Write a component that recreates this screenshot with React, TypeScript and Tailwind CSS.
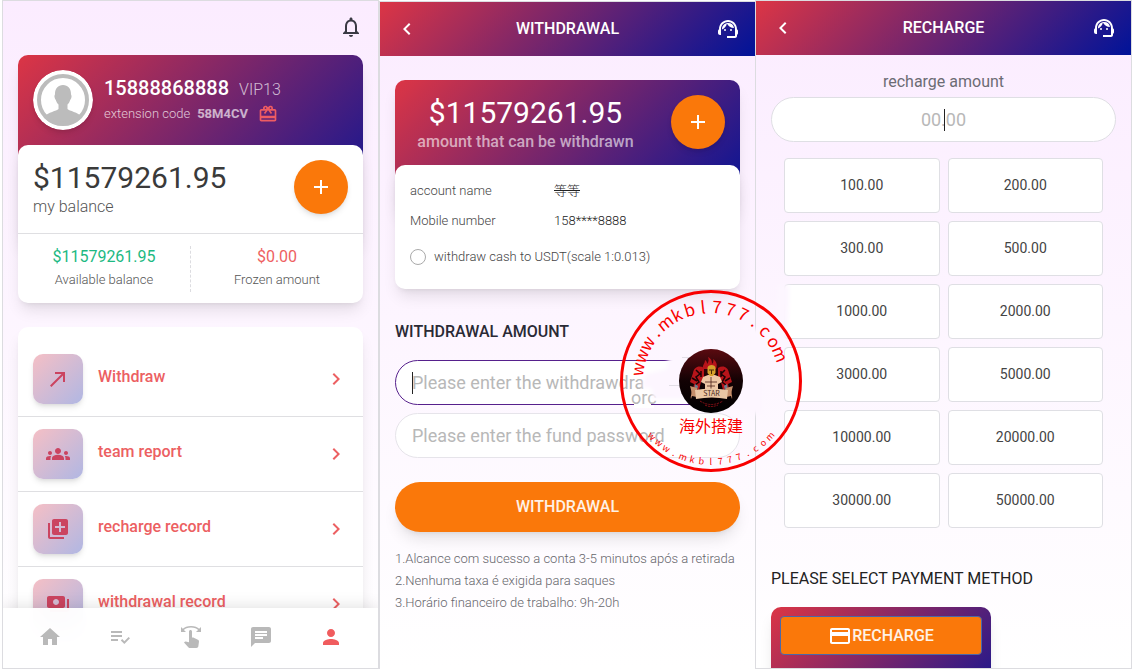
import {
  MdAdd,
  MdCallMade,
  MdChat,
  MdChevronLeft,
  MdChevronRight,
  MdCreditCard,
  MdGroups,
  MdHome,
  MdLibraryAdd,
  MdNotificationsNone,
  MdPayments,
  MdPerson,
  MdPlaylistAddCheck,
  MdRedeem,
  MdSupportAgent,
  MdSwipe,
} from "react-icons/md";

const menu = [
  { label: "Withdraw", icon: MdCallMade },
  { label: "team report", icon: MdGroups },
  { label: "recharge record", icon: MdLibraryAdd },
  { label: "withdrawal record", icon: MdPayments },
];

const tabs = [
  { label: "Home", icon: MdHome },
  { label: "Tasks", icon: MdPlaylistAddCheck },
  { label: "Grab", icon: MdSwipe },
  { label: "Messages", icon: MdChat },
  { label: "Mine", icon: MdPerson, active: true },
];

const amounts = [
  "100.00", "200.00",
  "300.00", "500.00",
  "1000.00", "2000.00",
  "3000.00", "5000.00",
  "10000.00", "20000.00",
  "30000.00", "50000.00",
];

const notes = [
  "1.Alcance com sucesso a conta 3-5 minutos após a retirada",
  "2.Nenhuma taxa é exigida para saques",
  "3.Horário financeiro de trabalho: 9h-20h",
];

const site = "www.mkbl777.com".split("");

function TopBar({ title }: { title: string }) {
  return (
    <header className="flex h-[54px] items-center justify-between bg-[linear-gradient(135deg,#dc3545,#001399)] px-[15px] pb-px text-white">
      <button type="button" aria-label="Back">
        <MdChevronLeft className="size-6 [&>path:last-child]:stroke-current" />
      </button>
      <h1 className="text-base font-medium">{title}</h1>
      <button type="button" aria-label="Support">
        <MdSupportAgent className="size-6" />
      </button>
    </header>
  );
}

function PlusButton() {
  return (
    <button
      type="button"
      aria-label="Add"
      className="grid size-[54px] shrink-0 place-items-center rounded-full bg-[#fa780a] text-white shadow-md"
    >
      <MdAdd className="size-6" />
    </button>
  );
}

function Account() {
  return (
    <section className="relative flex-1 overflow-hidden border border-[#dcdce0] bg-linear-to-b from-[#fbecff] to-white">
      <div className="flex h-[54px] items-center justify-end px-[15px] pb-[2px]">
        <button type="button" aria-label="Notifications" className="text-[#3a3a44]">
          <MdNotificationsNone className="size-6" />
        </button>
      </div>

      <div className="px-[15px]">
        <div className="h-[190px] rounded-[10px] bg-[linear-gradient(135deg,#dc3545,#001399)] p-[15px] shadow-lg">
          <div className="flex items-center gap-[11px]">
            <Avatar />
            <div>
              <div className="flex items-baseline gap-[10px] text-white">
                <span className="text-xl leading-7 font-medium">15888868888</span>
                <span className="text-base font-light text-white/70">VIP13</span>
              </div>
              <div className="flex items-center text-[13px] leading-6 font-light text-white/75">
                extension code
                <b className="ml-[7px] font-bold text-white/65">58M4CV</b>
                <MdRedeem className="ml-[10px] size-5 text-[#ee5c62]" />
              </div>
            </div>
          </div>
        </div>

        <div className="-mt-[100px] rounded-[10px] bg-white shadow-lg">
          <div className="flex h-[89px] items-start justify-between border-b border-[#dfdfe2] px-[15px] pt-[15px]">
            <div>
              <p className="text-[30px] leading-[36px] text-[#3a3a3a]">$11579261.95</p>
              <p className="text-base leading-[22px] font-light text-[#555]">my balance</p>
            </div>
            <PlusButton />
          </div>
          <div className="flex pt-3 pb-[11px] text-center">
            <div className="flex-1 border-r border-dashed border-[#dcdce0]">
              <p className="text-base leading-[22px] text-[#1cb982]">$11579261.95</p>
              <p className="text-[13px] leading-6 font-light text-[#555]">Available balance</p>
            </div>
            <div className="flex-1">
              <p className="text-base leading-[22px] text-[#ee5f62]">$0.00</p>
              <p className="text-[13px] leading-6 font-light text-[#555]">Frozen amount</p>
            </div>
          </div>
        </div>

        <ul className="mt-6 rounded-[10px] bg-white pt-[15px] shadow-lg">
          {menu.map(({ label, icon: Icon }) => (
            <li key={label} className="border-b border-[#dfdfe2]">
              <a href="#" className="flex items-center px-[15px] py-3 text-[#ec6062]">
                <span className="grid size-[50px] place-items-center rounded-[10px] bg-[linear-gradient(135deg,#f5bfc5,#b0b7e3)] text-[#cb4460] shadow-md">
                  <Icon className="size-6" />
                </span>
                <span className="ml-[15px] flex-1 pb-1 text-base font-medium">{label}</span>
                <MdChevronRight className="size-6 [&>path:last-child]:stroke-current" />
              </a>
            </li>
          ))}
        </ul>
      </div>

      <nav className="absolute inset-x-0 bottom-0 flex h-[60px] items-center bg-white/95 px-[12px] pb-[2px] shadow-[0_0_16px_rgba(0,0,0,0.14)] backdrop-blur-md">
        {tabs.map(({ label, icon: Icon, active }) => (
          <button
            key={label}
            type="button"
            aria-label={label}
            className={`grid flex-1 place-items-center ${active ? "text-[#f05c5e]" : "text-[#b9b9b9]"}`}
          >
            <Icon className="size-6" />
          </button>
        ))}
      </nav>
    </section>
  );
}

function Avatar() {
  return (
    <svg viewBox="0 0 60 60" className="size-[60px] rounded-full shadow-md" aria-hidden="true">
      <circle cx="30" cy="30" r="30" fill="#fff" />
      <path
        d="M30 15c-5 0-8 3.500-8 9 0 1-.8 1.500-.5 3 .3 2 1.300 2.500 1.700 4 .4 1.500 1.300 2.500 2.300 3.500V39c-2 2-10 3-15 8 5 5 12 8.500 19.500 8.500S44 52 49.500 47c-5-5-13-6-15-8v-4.500c1-1 1.900-2 2.300-3.500.4-1.500 1.400-2 1.700-4 .3-1.500-.5-2-.5-3 0-5.500-3-9-8-9z"
        fill="#bcbcbc"
      />
      <circle cx="30" cy="30" r="24" fill="none" stroke="#bcbcbc" strokeWidth="4" />
    </svg>
  );
}

function Withdrawal() {
  return (
    <section className="mt-px flex-1 overflow-hidden border-t border-l border-[#dcdce0] bg-linear-to-b from-[#fbecff] to-white">
      <TopBar title="WITHDRAWAL" />
      <div className="px-[15px] pt-6">
        <div className="h-[133px] rounded-[10px] bg-[linear-gradient(135deg,#dc3545,#001399)] p-[15px] shadow-lg">
          <div className="flex">
            <div className="flex-1 pr-[30px] text-center">
              <p className="text-[30px] leading-9 text-white">$11579261.95</p>
              <p className="text-base leading-[22px] font-medium text-white/60">amount that can be withdrawn</p>
            </div>
            <PlusButton />
          </div>
        </div>

        <div className="-mt-12 rounded-[10px] bg-white px-[15px] pt-[11px] pb-[16px] text-[13px] font-light text-[#444] shadow-lg">
          <dl className="grid grid-cols-[144px_1fr] leading-[30px]">
            <dt>account name</dt>
            <dd className="text-[#222] line-through">等等</dd>
            <dt>Mobile number</dt>
            <dd className="text-[#222]">158****8888</dd>
          </dl>
          <label className="flex h-[37px] items-center gap-2 pt-1">
            <input
              type="radio"
              name="usdt"
              className="size-4 appearance-none rounded-full border border-[#aaa] bg-white"
            />
            withdraw cash to USDT(scale 1:0.013)
          </label>
        </div>

        <form className="mt-[31px]">
          <h2 className="text-base font-medium text-[#2a2a35]">WITHDRAWAL AMOUNT</h2>
          <div className="relative mt-4">
            <input
              type="text"
              aria-label="Withdrawal amount"
              placeholder="Please enter the withdrawdra"
              className="h-[45px] w-full rounded-full border border-[#56208c] bg-white px-4 text-lg outline-none placeholder:text-[#b8b8b8]"
            />
            <span className="absolute top-3 left-[17px] h-[22px] w-px bg-[#222]" />
          </div>
          <input
            type="password"
            aria-label="Fund password"
            placeholder="Please enter the fund password"
            className="mt-2 h-[45px] w-full rounded-full border border-[#e6e4ea] bg-white px-4 text-lg outline-none placeholder:text-[#b8b8b8]"
          />
          <button
            type="button"
            className="mt-6 h-[50px] w-full rounded-full bg-[#fa780a] text-base font-medium text-white/90 shadow-lg"
          >
            WITHDRAWAL
          </button>
        </form>

        <div className="mt-4 text-[13px] leading-[22px] font-light text-[#66666c]">
          {notes.map((note) => (
            <p key={note} className="whitespace-nowrap">{note}</p>
          ))}
        </div>
      </div>
    </section>
  );
}

function Recharge() {
  return (
    <section className="flex-1 overflow-hidden border border-[#dcdce0] bg-linear-to-b from-[#fbecff] to-white">
      <TopBar title="RECHARGE" />
      <div className="px-[15px] pt-[15px]">
        <label htmlFor="amount" className="block text-center text-base text-[#6c6c74]">
          recharge amount
        </label>
        <div className="relative mt-[3px]">
          <input
            id="amount"
            type="text"
            placeholder="00.00"
            className="h-[45px] w-full rounded-full border border-[#dfdfe4] bg-white px-4 text-center text-lg outline-none placeholder:text-[#b8b8b8]"
          />
          <span className="absolute top-3 left-1/2 h-[22px] w-px bg-[#222]" />
        </div>

        <div className="mt-4 grid grid-cols-2 gap-2 px-[13px]">
          {amounts.map((amount) => (
            <button
              key={amount}
              type="button"
              className="h-[55px] rounded border border-[#dfdfe4] bg-white pb-[2px] text-sm text-[#444]"
            >
              {amount}
            </button>
          ))}
        </div>

        <h2 className="mt-[39px] text-base text-[#222]">PLEASE SELECT PAYMENT METHOD</h2>
        <div className="mt-4 h-[130px] w-[220px] rounded-[10px] bg-[linear-gradient(135deg,#dc3545,#001399)] p-[9px] shadow-lg">
          <button
            type="button"
            className="flex h-[39px] w-full items-center justify-center rounded border border-[#4a68a8] bg-[#fa780a] text-base font-medium text-white/90"
          >
            <MdCreditCard className="size-6 text-white" />
            RECHARGE
          </button>
        </div>
      </div>
    </section>
  );
}

function Stamp() {
  return (
    <svg
      viewBox="0 0 184 184"
      className="pointer-events-none absolute top-[289px] left-[619px] size-[184px] overflow-visible font-['Noto_Sans_CJK_SC',sans-serif]"
    >
      <defs>
        <filter id="soft" x="-20%" y="-20%" width="140%" height="140%">
          <feGaussianBlur stdDeviation="2" />
        </filter>
        <linearGradient id="disc" x1="0" y1="0" x2="0" y2="1">
          <stop offset="0" stopColor="#5a0a10" />
          <stop offset=".5" stopColor="#120204" />
          <stop offset="1" stopColor="#000" />
        </linearGradient>
      </defs>

      <path d="M15 106h20v13H15z" fill="#fff" />
      <text x="12" y="115" fontSize="18" fill="#b8b8b8" className="font-['Roboto',sans-serif]">orc</text>
      <g fill="#fdf6ff" filter="url(#soft)">
        <path d="M50 62h82v58H73V110H33V99H23l3-14 22-5z" />
        <path d="M131 40h12v85h-12z" />
        <path d="M158-4h12v16l-2 38h-9z" />
      </g>
      <path d="M63 68.500h18M50 96.500h14" stroke="#e2dee6" />
      <path d="M32 115.500h40" stroke="#56208c" />

      <circle cx="92" cy="92" r="89.500" fill="none" stroke="#f80000" strokeWidth="3" />
      <g fill="#f80000" textAnchor="middle">
        {site.map((char, i) => (
          <text key={i} x="92" y="24" fontSize="17" transform={`rotate(${-81 + i * 10.7} 92 92)`}>
            {char}
          </text>
        ))}
        {site.map((char, i) => (
          <text key={i} x="92" y="176" fontSize="9" transform={`rotate(${47 - i * 6.7} 92 92)`}>
            {char}
          </text>
        ))}
        <text x="92" y="143" fontSize="16">海外搭建</text>
      </g>

      <circle cx="92" cy="92" r="32" fill="url(#disc)" />
      <g fill="#b8141a">
        <path d="M84 80c-1-4 2-5 2-9 2 1 2 3 2 4 2-2 2-5 1-7 4 2 4 5 4 7 1-1 2-3 1-5 3 2 5 5 3 10z" />
        <path d="M85 79c-5-3-10-1-11 5l-3 9 4 2-1 5 6 1 2-8 3-5zM99 79c5-3 10-1 11 5l3 9-4 2 1 5-6 1-2-8-3-5z" />
      </g>
      <path
        d="M77 81l4 4-4 3 3 5-4 3M106 81l-4 4 4 3-3 5 4 3M73 89l5 3M111 89l-5 3M82 82v6M102 82v6"
        stroke="#1c0204"
        strokeWidth="1.500"
        fill="none"
      />
      <path d="M84 88l5-2h7l5 2 2 5-4 2v7H86v-7l-4-2z" fill="#edc6a4" />
      <path d="M92 88v13M86 93h12M88 97h8" stroke="#4a2018" strokeWidth=".8" />
      <path d="M88.500 79c0-4 8-4 8 0v5l-2.500 3h-3l-2.500-3z" fill="#d6a02c" />
      <path d="M90 81h5M92.500 81v4" stroke="#4a2a08" />
      <path d="M76 95l3 2-1 4-3 1zM108 95l-3 2 1 4 3 1z" fill="#6c8090" />
      <path d="M71 97l7 2v9l-5-1-1 3c-1-4 2-4-1-13zM114 97l-7 2v9l5-1 1 3c1-4-2-4 1-13z" fill="#c58e6a" />
      <path d="M76 101q16-3 33 0l-1 9q-15-3-31 0z" fill="#eac7a5" />
      <text x="92.500" y="107" fontSize="7" fill="#4a2a1c" textAnchor="middle">STAR</text>
      <path d="M81 112q11 7 23 0M86 116q6 3 13 0" stroke="#8a1018" strokeDasharray="2 1" fill="none" />
    </svg>
  );
}

export default function App() {
  return (
    <main className="relative flex h-screen overflow-hidden bg-white px-[2px] font-['Roboto','Noto_Sans_CJK_SC',sans-serif]">
      <Account />
      <Withdrawal />
      <Recharge />
      <Stamp />
    </main>
  );
}
